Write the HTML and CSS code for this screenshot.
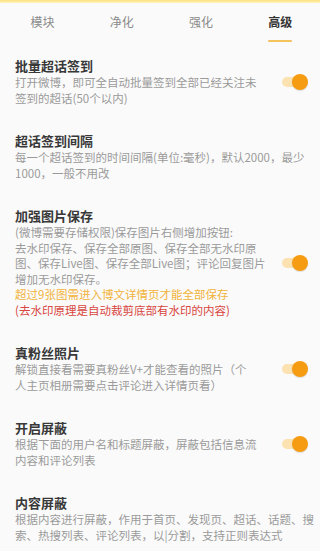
FILE: index.html
```html
<!DOCTYPE html>
<html lang="zh-CN">
<head>
<meta charset="utf-8">
<link rel="stylesheet" href="styles.css">
</head>
<body>
<div class="strip"></div>
<nav class="tabs">
  <div class="tab"><span class="tab-label">模块</span></div>
  <div class="tab"><span class="tab-label">净化</span></div>
  <div class="tab"><span class="tab-label">强化</span></div>
  <div class="tab active"><span class="tab-label">高级</span><span class="tab-line"></span></div>
</nav>
<main class="list">
  <section class="row">
    <div class="text">
      <div class="title">批量超话签到</div>
      <div class="desc">打开微博，即可全自动批量签到全部已经关注未<br>签到的超话(50个以内)</div>
    </div>
    <div class="switch"><span class="track"></span><span class="knob"></span></div>
  </section>
  <section class="row">
    <div class="text">
      <div class="title">超话签到间隔</div>
      <div class="desc">每一个超话签到的时间间隔(单位:毫秒)，默认2000，最少<br>1000，一般不用改</div>
    </div>
  </section>
  <section class="row">
    <div class="text">
      <div class="title">加强图片保存</div>
      <div class="desc">(微博需要存储权限)保存图片右侧增加按钮:<br>去水印保存、保存全部原图、保存全部无水印原<br>图、保存Live图、保存全部Live图；评论回复图片<br>增加无水印保存。</div>
      <div class="desc warn">超过9张图需进入博文详情页才能全部保存</div>
      <div class="desc alert">(去水印原理是自动裁剪底部有水印的内容)</div>
    </div>
    <div class="switch"><span class="track"></span><span class="knob"></span></div>
  </section>
  <section class="row">
    <div class="text">
      <div class="title">真粉丝照片</div>
      <div class="desc">解锁直接看需要真粉丝V+才能查看的照片（个<br>人主页相册需要点击评论进入详情页看）</div>
    </div>
    <div class="switch"><span class="track"></span><span class="knob"></span></div>
  </section>
  <section class="row">
    <div class="text">
      <div class="title">开启屏蔽</div>
      <div class="desc">根据下面的用户名和标题屏蔽，屏蔽包括信息流<br>内容和评论列表</div>
    </div>
    <div class="switch"><span class="track"></span><span class="knob"></span></div>
  </section>
  <section class="row">
    <div class="text">
      <div class="title">内容屏蔽</div>
      <div class="desc">根据内容进行屏蔽，作用于首页、发现页、超话、话题、搜<br>索、热搜列表、评论列表，以|分割，支持正则表达式</div>
    </div>
  </section>
</main>
</body>
</html>
```
FILE: styles.css
```css
html, body {
  margin: 0;
  padding: 0;
}
body {
  width: 320px;
  height: 551px;
  overflow: hidden;
  background: #fafafa;
  font-family: "Noto Sans CJK SC", "Noto Sans", sans-serif;
}
.strip {
  height: 3px;
  background: linear-gradient(#fbe27a, #fdf3c4);
}
.tabs {
  display: flex;
  height: 41px;
  padding-left: 3px;
}
.tab {
  flex: 1;
  display: flex;
  flex-direction: column;
  align-items: center;
  padding-top: 11px;
}
.tab-label {
  font-size: 12px;
  line-height: 16px;
  color: #8a8a8a;
}
.tab.active .tab-label {
  color: #333;
  font-weight: 700;
}
.tab-line {
  width: 24px;
  height: 2px;
  margin-top: 10px;
  border-radius: 1px;
  background: #f5c35c;
}
.row {
  display: flex;
  align-items: center;
  padding: 13px 12px 13px 15px;
}
.text {
  flex: 1;
  min-width: 0;
}
.title {
  font-size: 13px;
  line-height: 18px;
  font-weight: 600;
  color: #383838;
}
.desc {
  font-size: 11.5px;
  line-height: 15.5px;
  color: #9a9a9a;
  white-space: nowrap;
}
.desc.warn {
  color: #f2b33a;
}
.desc.alert {
  color: #d8463e;
}
.switch {
  position: relative;
  flex: none;
  width: 26px;
  height: 16px;
  margin-left: 8px;
}
.track {
  position: absolute;
  left: 0;
  top: 3px;
  width: 22px;
  height: 10px;
  border-radius: 5px;
  background: #fbe2b0;
}
.knob {
  position: absolute;
  right: 0;
  top: 0;
  width: 16px;
  height: 16px;
  border-radius: 50%;
  background: #f69c12;
  box-shadow: 0 1px 1px rgba(0, 0, 0, 0.12);
}
```
